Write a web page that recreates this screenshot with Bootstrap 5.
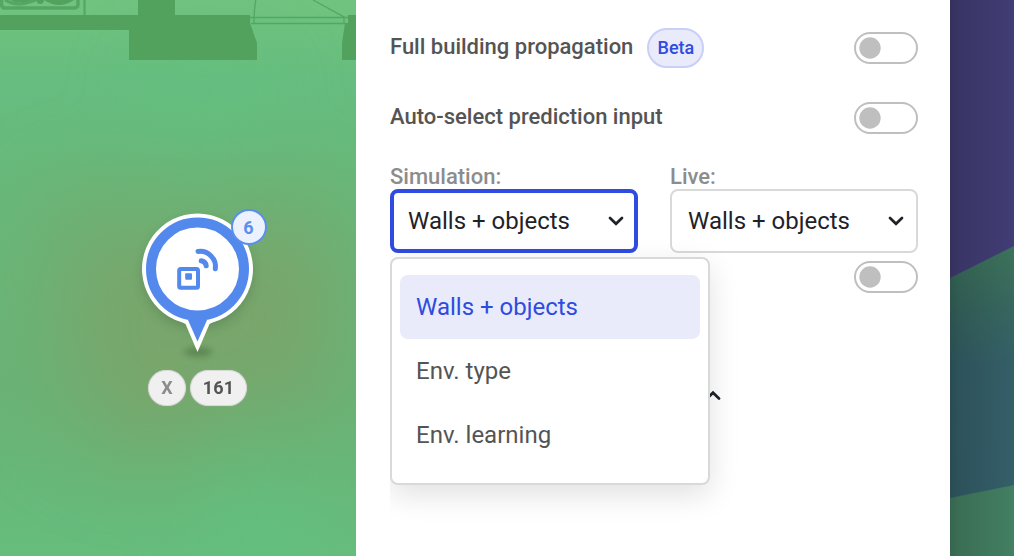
<!DOCTYPE html>
<html lang="en">
<head>
<meta charset="utf-8">
<meta name="viewport" content="width=device-width, initial-scale=1">
<title>Prediction settings</title>
<link href="https://cdn.jsdelivr.net/npm/bootstrap@5.3.0/dist/css/bootstrap.min.css" rel="stylesheet">
<style>
  body { font-family: Roboto, "Liberation Sans", sans-serif; color: #545454; }
  .planner { width: 1014px; height: 556px; }
  .map { width: 356px; }
  .map > svg, .city > svg { display: block; }
  .panel { width: 594px; padding: 13px 32px 0 34px; background: #fff; }
  .panel-body { clip-path: inset(0 -32px 0 0); }
  .opt { height: 70px; }
  .opt-name { font-size: 22px; font-weight: 500; line-height: 30px; padding-bottom: 2px; }
  .beta { height: 40px; width: 57px; margin-left: 14px; padding-bottom: 1px; border: 2px solid #c9cff6; background: #e9ebfa; color: #2f4be0; font-size: 18px; font-weight: 500; }
  .panel .switch { width: 64px; height: 32px; margin: 0; border: 2px solid #bfbfbf; background-color: #fff; background-size: 28px 28px; background-position: 0 center;
    background-image: url("data:image/svg+xml,%3csvg xmlns='http://www.w3.org/2000/svg' viewBox='0 0 28 28'%3e%3ccircle cx='14' cy='14' r='10.7' fill='%23bfbfbf'/%3e%3c/svg%3e"); }
  .caption { height: 36px; padding-top: 10px; font-size: 22px; line-height: 28px; font-weight: 500; color: #8c8c8c; }
  .panel .picker { height: 64px; width: 248px; padding: 0 12px 0 16px; border: 2px solid #d9d9d9; border-radius: 8px; background: #fff; color: #1f2328; font-size: 24px; }
  .panel .picker.is-open { border: 4px solid #2f4be0; padding: 0 10px 0 14px; }
  .choices { top: 68px; left: 0; width: 320px; height: 228px; padding: 16px 8px; border: 2px solid #d9d9d9; border-radius: 8px; background: #fff; box-shadow: 0 10px 30px rgba(0,0,0,.12); z-index: 5; }
  .choice { height: 64px; padding: 0 16px; border-radius: 8px; font-size: 24px; color: #545454; }
  .choice.chosen { background: #e9ebfa; color: #2f4be0; }
  .collapse-mark { margin: 97px 0 0 315px; }
  .pin { left: 127px; top: 200px; }
  .pin-count { left: 230.5px; top: 209px; width: 36px; height: 36px; border: 2px solid #5a8fee; background: #ebf2fd; color: #5a8fee; font-size: 18px; font-weight: 700; }
  .pin-tags { left: 148px; top: 370px; gap: 4px; }
  .tag { height: 36px; padding-bottom: 2px; border: 1px solid #d6d9d4; background: #f0f0f0; font-size: 18px; font-weight: 700; box-shadow: 0 0 1px #bbb; }
  .tag-x { width: 38px; color: #8c8c8c; }
  .tag-id { width: 57px; letter-spacing: .2px; }
  .city { width: 64px; }
</style>
</head>
<body>
<div class="planner d-flex overflow-hidden">
  <section class="map position-relative flex-shrink-0">
    <svg width="356" height="556" viewBox="0 0 356 556">
      <defs>
        <filter id="soft" filterUnits="userSpaceOnUse" x="-150" y="-100" width="660" height="760" color-interpolation-filters="sRGB"><feGaussianBlur stdDeviation="36"/></filter>
        <linearGradient id="floor" x1="0" y1="0" x2="0" y2="1">
          <stop offset="0" stop-color="#70c37f"/><stop offset=".07" stop-color="#6bc07e"/>
          <stop offset=".14" stop-color="#66bd7f"/><stop offset=".3" stop-color="#67ba7b"/>
          <stop offset=".7" stop-color="#69b376"/><stop offset="1" stop-color="#66bd7c"/>
        </linearGradient>
      </defs>
      <rect width="356" height="556" fill="url(#floor)"/>
      <g filter="url(#soft)">
        <path d="M20 230Q70 140 190 195Q330 140 370 230Q380 380 320 435Q260 410 215 440Q150 500 70 440Q10 380 20 230Z" fill="#71ac71" opacity=".75"/>
        <path d="M85 260Q110 225 190 260Q290 200 320 270Q330 360 290 405Q240 370 200 410Q150 460 110 410Q75 360 85 260Z" fill="#7ba46b" opacity=".85"/>
        <ellipse cx="262" cy="545" rx="55" ry="45" fill="#62c280" opacity=".75"/>
        <ellipse cx="205" cy="90" rx="65" ry="24" fill="#62c07f" opacity=".8"/>
      </g>
      <g fill="#52a25e">
        <path d="M0 15H138V0H175V15H250V23L257 43V60H129V30H0Z"/>
        <path d="M348 15H356V60H342V43L345 23H348Z"/>
      </g>
      <g fill="none" stroke="#55a663" stroke-width="1.3">
        <path d="M250 17.500H348M251 23.500H346M255.800 0Q254 9 254 23M313 0L344 17V23"/>
        <path d="M84.500 0V15" stroke-width="2.200"/>
        <path d="M1.500 0V4Q1.500 8 5.500 8H74Q78 8 78 4V0" stroke-width="3.500"/>
        <path d="M5 0Q18 8 36 0" stroke-width="3"/>
      </g>
      <path d="M10 0Q20 5 32 0ZM36 0Q37 4 40 4Q44 4 44 0ZM44 0Q59 10 74 0Z" fill="#52a25e"/>
    </svg>

    <svg class="pin position-absolute" width="142" height="165" viewBox="127 200 142 165">
      <defs>
        <filter id="cast" x="-40%" y="-40%" width="180%" height="180%"><feGaussianBlur stdDeviation="6"/></filter>
        <filter id="foot" x="-50%" y="-80%" width="200%" height="260%"><feGaussianBlur stdDeviation="3"/></filter>
      </defs>
      <circle cx="197.500" cy="274" r="54" fill="#2e5534" opacity=".3" filter="url(#cast)"/>
      <ellipse cx="198" cy="352" rx="14" ry="4" fill="#35552d" opacity=".45" filter="url(#foot)"/>
      <path d="M197.500 352L185.500 324Q184 323 181 322A55.500 55.500 0 1 1 214 322Q211 323 209.500 324Z" fill="#fff"/>
      <path d="M197.500 341.500L188 320H207Z" fill="#5389ec"/>
      <circle cx="197.500" cy="269" r="46.500" fill="#fff" stroke="#5389ec" stroke-width="10"/>
      <g fill="none" stroke="#5389ec">
        <rect x="179.200" y="269" width="18.800" height="18.800" rx="1.500" stroke-width="4"/>
        <path d="M198 251.500C208 250 217 259 215.300 268.800M201.200 260.800Q205.600 261.400 206.200 265.800" stroke-width="5" stroke-linecap="round"/>
      </g>
      <rect x="185.200" y="273.300" width="6.800" height="6.500" rx="1" fill="#5389ec"/>
    </svg>
    <span class="pin-count position-absolute rounded-circle d-flex align-items-center justify-content-center">6</span>
    <div class="pin-tags position-absolute d-flex">
      <span class="tag tag-x rounded-pill d-flex align-items-center justify-content-center">X</span>
      <span class="tag tag-id rounded-pill d-flex align-items-center justify-content-center">161</span>
    </div>
  </section>

  <main class="panel flex-shrink-0">
    <div class="panel-body h-100">
      <div class="opt d-flex align-items-center">
        <span class="opt-name">Full building propagation</span>
        <span class="beta rounded-pill me-auto d-flex align-items-center justify-content-center">Beta</span>
        <div class="form-check form-switch p-0 m-0 d-flex"><input class="form-check-input switch" type="checkbox" role="switch" aria-label="Full building propagation"></div>
      </div>
      <div class="opt d-flex align-items-center justify-content-between">
        <span class="opt-name">Auto-select prediction input</span>
        <div class="form-check form-switch p-0 m-0 d-flex"><input class="form-check-input switch" type="checkbox" role="switch" aria-label="Auto-select prediction input"></div>
      </div>
      <div class="d-flex justify-content-between">
        <div>
          <div class="caption">Simulation:</div>
          <div class="position-relative">
            <button class="btn picker is-open d-flex align-items-center justify-content-between" type="button">Walls + objects
              <svg width="16" height="10" viewBox="0 0 16 10"><path d="M2 2L8 7.800L14 2" fill="none" stroke="#1f2328" stroke-width="2.700" stroke-linecap="round"/></svg>
            </button>
            <div class="choices position-absolute">
              <div class="choice chosen d-flex align-items-center">Walls + objects</div>
              <div class="choice d-flex align-items-center">Env. type</div>
              <div class="choice d-flex align-items-center">Env. learning</div>
            </div>
          </div>
        </div>
        <div>
          <div class="caption">Live:</div>
          <button class="btn picker d-flex align-items-center justify-content-between" type="button">Walls + objects
            <svg width="16" height="10" viewBox="0 0 16 10"><path d="M2 2L8 7.800L14 2" fill="none" stroke="#1f2328" stroke-width="2.700" stroke-linecap="round"/></svg>
          </button>
        </div>
      </div>
      <div class="d-flex justify-content-end mt-2">
        <div class="form-check form-switch p-0 m-0 d-flex"><input class="form-check-input switch" type="checkbox" role="switch" aria-label="Advanced"></div>
      </div>
      <svg class="collapse-mark d-block" width="16" height="10" viewBox="0 0 16 10"><path d="M2 8.500L8 2.700L14 8.500" fill="none" stroke="#1f2328" stroke-width="2.700" stroke-linecap="round"/></svg>
    </div>
  </main>

  <aside class="city flex-shrink-0">
    <svg width="64" height="556" viewBox="0 0 64 556">
      <defs>
        <linearGradient id="sea" x1="0" y1="0" x2="0" y2="1"><stop offset="0" stop-color="#3d735b"/><stop offset=".2" stop-color="#37675f"/><stop offset=".38" stop-color="#345f68"/><stop offset="1" stop-color="#345e6a"/></linearGradient>
        <linearGradient id="edge"><stop offset="0" stop-color="#000" stop-opacity=".2"/><stop offset=".15" stop-color="#000" stop-opacity=".13"/><stop offset="1" stop-color="#000" stop-opacity="0"/></linearGradient>
      </defs>
      <rect width="64" height="556" fill="#413d75"/>
      <path d="M0 278L64 246V556H0Z" fill="url(#sea)"/>
      <path d="M0 498L64 485V556H0Z" fill="#437f62"/>
      <rect width="64" height="556" fill="url(#edge)"/>
    </svg>
  </aside>
</div>
<script src="https://cdn.jsdelivr.net/npm/bootstrap@5.3.0/dist/js/bootstrap.bundle.min.js"></script>
</body>
</html>
